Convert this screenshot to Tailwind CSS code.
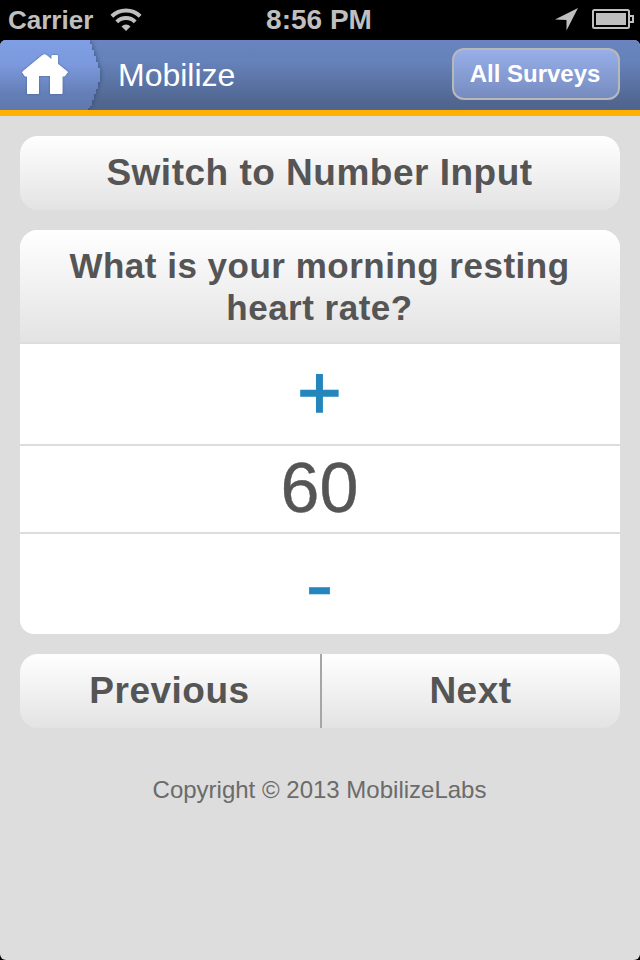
<!DOCTYPE html>
<html lang="en">
<head>
<meta charset="utf-8">
<title>Mobilize</title>
<script src="https://cdn.jsdelivr.net/npm/@tailwindcss/browser@4"></script>
</head>
<body class="bg-black">
<div class="w-[640px] h-[960px] flex flex-col overflow-hidden font-['Liberation_Sans',Arial,sans-serif]">
  <div class="h-10 shrink-0 grid grid-cols-[1fr_auto_1fr] items-center pl-2 pr-1.5 text-[#bfbfbf] font-bold">
    <div class="flex items-center gap-[17px]">
      <span class="text-[26px] leading-10">Carrier</span>
      <svg class="w-8 h-6" viewBox="0 0 32 24" fill="none" stroke="#bfbfbf" stroke-width="4">
        <path d="M1.800 8.300a20.500 20.500 0 0 1 28.400 0"/>
        <path d="M6.800 13.900a12.900 12.900 0 0 1 18.400 0"/>
        <path d="M16 23l-4.500-4.600a6.500 6.500 0 0 1 9 0z" fill="#bfbfbf" stroke="none"/>
      </svg>
    </div>
    <span class="text-[28px] leading-[38px] -ml-1">8:56 PM</span>
    <div class="flex items-center justify-end gap-[14px] pb-0.5">
      <svg class="w-[23px] h-6" viewBox="0 0 23 24" fill="#bfbfbf"><path d="M23 1L11.500 23.500V13L0 12.500z"/></svg>
      <svg class="w-[42px] h-5" viewBox="0 0 42 20" fill="none" stroke="#bfbfbf" stroke-width="2">
        <rect x="1" y="1" width="36" height="18" rx="1.5"/><rect x="4" y="4" width="30" height="12" fill="#bfbfbf" stroke="none"/><path d="M38 7h3v6h-3"/>
      </svg>
    </div>
  </div>
  <div class="grow flex flex-col rounded-[6px] overflow-hidden bg-[#dddddd]">
    <header class="h-[76px] shrink-0 flex items-center border-b-[6px] border-[#ffb000] pr-5 bg-[linear-gradient(#6984bf,#6682ba_30%,#506690_90%,#506690)]">
      <svg class="w-[106px] h-[70px] shrink-0" viewBox="0 0 106 70">
        <defs>
          <linearGradient id="g" x1="0" y1="0" x2="0" y2="1"><stop offset="0" stop-color="#809ee3"/><stop offset=".35" stop-color="#7b99dd"/><stop offset=".75" stop-color="#657fb8"/><stop offset="1" stop-color="#6078ae"/></linearGradient>
          <filter id="s" x="-20%" y="-20%" width="140%" height="140%"><feDropShadow dx="1" dy="0" stdDeviation="2" flood-color="#2c3c66" flood-opacity=".55"/></filter>
          <filter id="h" x="-20%" y="-20%" width="140%" height="140%"><feDropShadow dx="0" dy="0" stdDeviation="1" flood-color="#34466f" flood-opacity=".6"/></filter>
        </defs>
        <path filter="url(#s)" fill="url(#g)" d="M0 0H90V4H92V10H94V16H96V22H98V28H100V42H98V49H96V54H94V60H92V66H90V68H88V70H0z"/>
        <path filter="url(#h)" fill="#fff" stroke="#fff" stroke-linejoin="round" d="M22.500 32L42.500 15.500Q44.500 14 46.500 15.500L52 20V15.500H57.500V24L67.500 32L64.500 36H62V53.500H50.500V35.500H38.500V53.500H27.500V36H25z"/>
      </svg>
      <h1 class="ml-3 grow text-[32px] leading-[70px] text-white">Mobilize</h1>
      <a class="relative top-[-1px] w-[168px] h-[52px] rounded-xl border-2 border-[#b8b8b8] bg-[linear-gradient(#97aee8,#768cc0)] pr-0.5 text-white font-bold text-2xl leading-[48px] text-center whitespace-nowrap">All Surveys</a>
    </header>
    <main class="p-5 flex flex-col gap-5 text-[#555555]">
      <button class="h-[74px] pr-px rounded-[18px] bg-[linear-gradient(#ffffff,#e3e3e3)] text-[37px] tracking-[0.5px] leading-[74px] font-bold">Switch to Number Input</button>
      <section class="rounded-t-[18px] rounded-b-[14px] overflow-hidden bg-white text-center">
        <h2 class="h-[114px] pt-[15px] pl-8 pr-[33px] border-b-2 border-[#dddddd] bg-[linear-gradient(#ffffff,#e3e3e3)] text-[35px] tracking-[0.5px] leading-[42px] font-bold">What is your morning resting heart rate?</h2>
        <div class="h-[102px] pr-px border-b-2 border-[#dddddd] text-[76px] leading-[98px] text-[#2586bd] [-webkit-text-stroke:1.5px_#2586bd]">+</div>
        <div class="h-[88px] pr-px border-b-2 border-[#dddddd] text-[70px] leading-[84px] [-webkit-text-stroke:0.4px_#555555]">60</div>
        <div class="h-[100px] pr-px text-[84px] leading-[101px] text-[#2586bd] [-webkit-text-stroke:0.5px_#2586bd]">-</div>
      </section>
      <nav class="h-[74px] flex rounded-[18px] overflow-hidden bg-[linear-gradient(#ffffff,#e3e3e3)] text-[37px] tracking-[0.5px] leading-[74px] font-bold">
        <button class="w-[302px] pr-px border-r-2 border-[#a6a6a6]">Previous</button>
        <button class="grow pr-px">Next</button>
      </nav>
      <footer class="pt-7 pr-px text-2xl leading-7 text-center text-[#6b6b6b]">Copyright © 2013 MobilizeLabs</footer>
    </main>
  </div>
</div>
</body>
</html>
